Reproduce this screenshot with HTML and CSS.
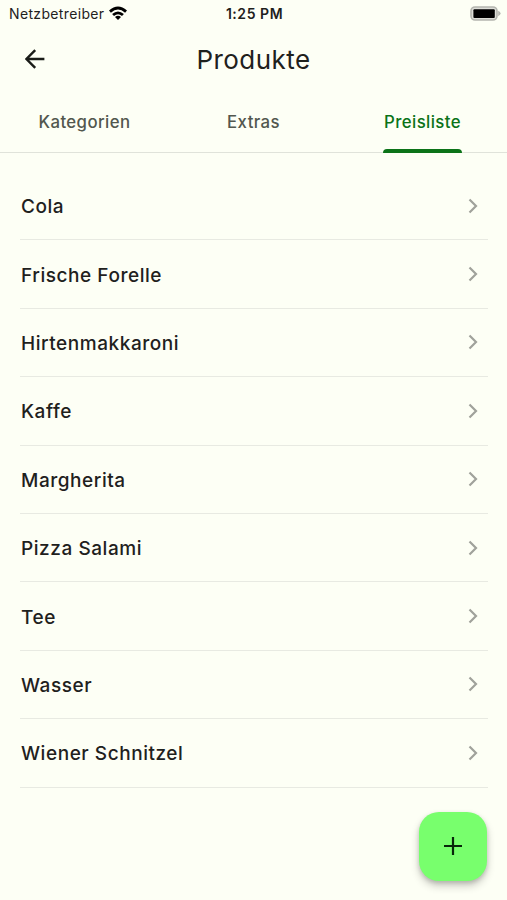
FILE: index.html
```html
<!DOCTYPE html>
<html lang="de">
<head>
  <meta charset="UTF-8">
  <meta name="viewport" content="width=device-width, initial-scale=1.0">
  <title>Produkte</title>
  <link rel="stylesheet" href="styles.css">
</head>
<body>

  <div class="status-bar">
    <div class="carrier">
      <span>Netzbetreiber</span>
      <svg class="wifi" viewBox="0 0 18 14">
        <path d="M0 4.6Q9-3.6 18 4.6L16.1 6.7Q9 .5 1.9 6.7Z"/>
        <path d="M3.1 7.9Q9 2.9 14.9 7.9L13 9.9Q9 6.6 5 9.9Z"/>
        <path d="M6 11Q9 8.5 12 11L9 14Z"/>
      </svg>
    </div>
    <span class="time">1:25 PM</span>
    <svg class="battery" viewBox="0 0 32 15">
      <rect x="1" y="1" width="26" height="13" rx="4" fill="#deded8" stroke="#b4b5af" stroke-width="1.6"/>
      <rect x="3.4" y="3.2" width="21.4" height="8.8" rx="1"/>
      <path d="M28.2 4.8Q33 7.5 28.2 10.2Z" fill="#b4b5af"/>
    </svg>
  </div>

  <header class="app-bar">
    <svg class="back" viewBox="0 0 20 20">
      <path d="M19.4 10H1.8M10.2 1.2L1.4 10L10.2 18.8"/>
    </svg>
    <h1>Produkte</h1>
  </header>

  <nav class="tabs">
    <div class="tab"><span>Kategorien</span></div>
    <div class="tab"><span>Extras</span></div>
    <div class="tab active"><span>Preisliste</span></div>
  </nav>

  <ul class="list">
    <li><span>Cola</span><svg class="chevron" viewBox="0 0 10 16"><path d="M1.5 1.5L8 8L1.5 14.5"/></svg></li>
    <li><span>Frische Forelle</span><svg class="chevron" viewBox="0 0 10 16"><path d="M1.5 1.5L8 8L1.5 14.5"/></svg></li>
    <li><span>Hirtenmakkaroni</span><svg class="chevron" viewBox="0 0 10 16"><path d="M1.5 1.5L8 8L1.5 14.5"/></svg></li>
    <li><span>Kaffe</span><svg class="chevron" viewBox="0 0 10 16"><path d="M1.5 1.5L8 8L1.5 14.5"/></svg></li>
    <li><span>Margherita</span><svg class="chevron" viewBox="0 0 10 16"><path d="M1.5 1.5L8 8L1.5 14.5"/></svg></li>
    <li><span>Pizza Salami</span><svg class="chevron" viewBox="0 0 10 16"><path d="M1.5 1.5L8 8L1.5 14.5"/></svg></li>
    <li><span>Tee</span><svg class="chevron" viewBox="0 0 10 16"><path d="M1.5 1.5L8 8L1.5 14.5"/></svg></li>
    <li><span>Wasser</span><svg class="chevron" viewBox="0 0 10 16"><path d="M1.5 1.5L8 8L1.5 14.5"/></svg></li>
    <li><span>Wiener Schnitzel</span><svg class="chevron" viewBox="0 0 10 16"><path d="M1.5 1.5L8 8L1.5 14.5"/></svg></li>
  </ul>

  <button class="fab" aria-label="Hinzufügen">
    <svg viewBox="0 0 18 18"><path d="M9 0V18M0 9H18"/></svg>
  </button>

</body>
</html>
```
FILE: styles.css
```css
* {
  box-sizing: border-box;
}

body {
  margin: 0;
  height: 900px;
  overflow: hidden;
  background-color: #fdfff5;
  color: #1f211d;
  font-family: Inter, "Liberation Sans", sans-serif;
}

svg {
  display: block;
}

.status-bar {
  display: grid;
  grid-template-columns: 1fr auto 1fr;
  align-items: center;
  height: 27px;
  padding: 0 7px 0 9px;
  font-size: 14px;
}

.carrier {
  display: flex;
  align-items: center;
  gap: 5px;
  letter-spacing: 0.35px;
}

.wifi {
  width: 18px;
  height: 14px;
  margin-top: -2px;
}

.time {
  font-weight: 600;
  letter-spacing: 0.55px;
}

.battery {
  width: 32px;
  height: 15px;
  justify-self: end;
  margin-right: -2px;
}

.app-bar {
  display: grid;
  grid-template-columns: 60px 1fr 60px;
  align-items: center;
  height: 65px;
}

.back {
  width: 20px;
  height: 20px;
  margin: -1px 0 0 25px;
  fill: none;
  stroke: #1a1c18;
  stroke-width: 2.4;
}

h1 {
  margin: 0;
  text-align: center;
  font-size: 26px;
  font-weight: 400;
  letter-spacing: 0.45px;
}

.tabs {
  display: grid;
  grid-template-columns: repeat(3, 1fr);
  height: 61px;
  border-bottom: 1px solid #e0e3da;
}

.tab {
  display: flex;
  justify-content: center;
  color: #52574e;
  font-size: 16.8px;
  font-weight: 500;
  letter-spacing: 0.4px;
}

.tab span {
  height: 61px;
  padding: 0 1px;
  line-height: 61px;
}

.active span {
  position: relative;
  color: #0b7318;
}

/* indicator lies over the divider */
.active span::after {
  content: "";
  position: absolute;
  left: 0;
  right: 0;
  bottom: 0;
  height: 4px;
  border-radius: 4px 4px 0 0;
  background-color: #0b7318;
}

.list {
  list-style: none;
  margin: 0;
  padding: 19px 19px 0 20px;
}

.list li {
  display: flex;
  align-items: center;
  justify-content: space-between;
  height: 68.4px;
  padding: 0 10px 0 1px;
  border-bottom: 1px solid #e8eae2;
  font-size: 19px;
  font-weight: 500;
  letter-spacing: 0.55px;
}

.list span {
  padding-top: 2px;
}

.chevron {
  width: 10px;
  height: 16px;
  fill: none;
  stroke: #a0a29b;
  stroke-width: 2.2;
}

.fab {
  position: absolute;
  right: 20px;
  bottom: 19px;
  display: flex;
  align-items: center;
  justify-content: center;
  width: 68px;
  height: 69px;
  padding: 0 0 1px;
  border: none;
  border-radius: 20px;
  background-color: #78ff6d;
  box-shadow: 0 5px 8px rgba(0, 0, 0, 0.2), 0 2px 4px rgba(0, 0, 0, 0.15);
}

.fab svg {
  width: 18px;
  height: 18px;
  fill: none;
  stroke: #08270a;
  stroke-width: 2.2;
}
```
